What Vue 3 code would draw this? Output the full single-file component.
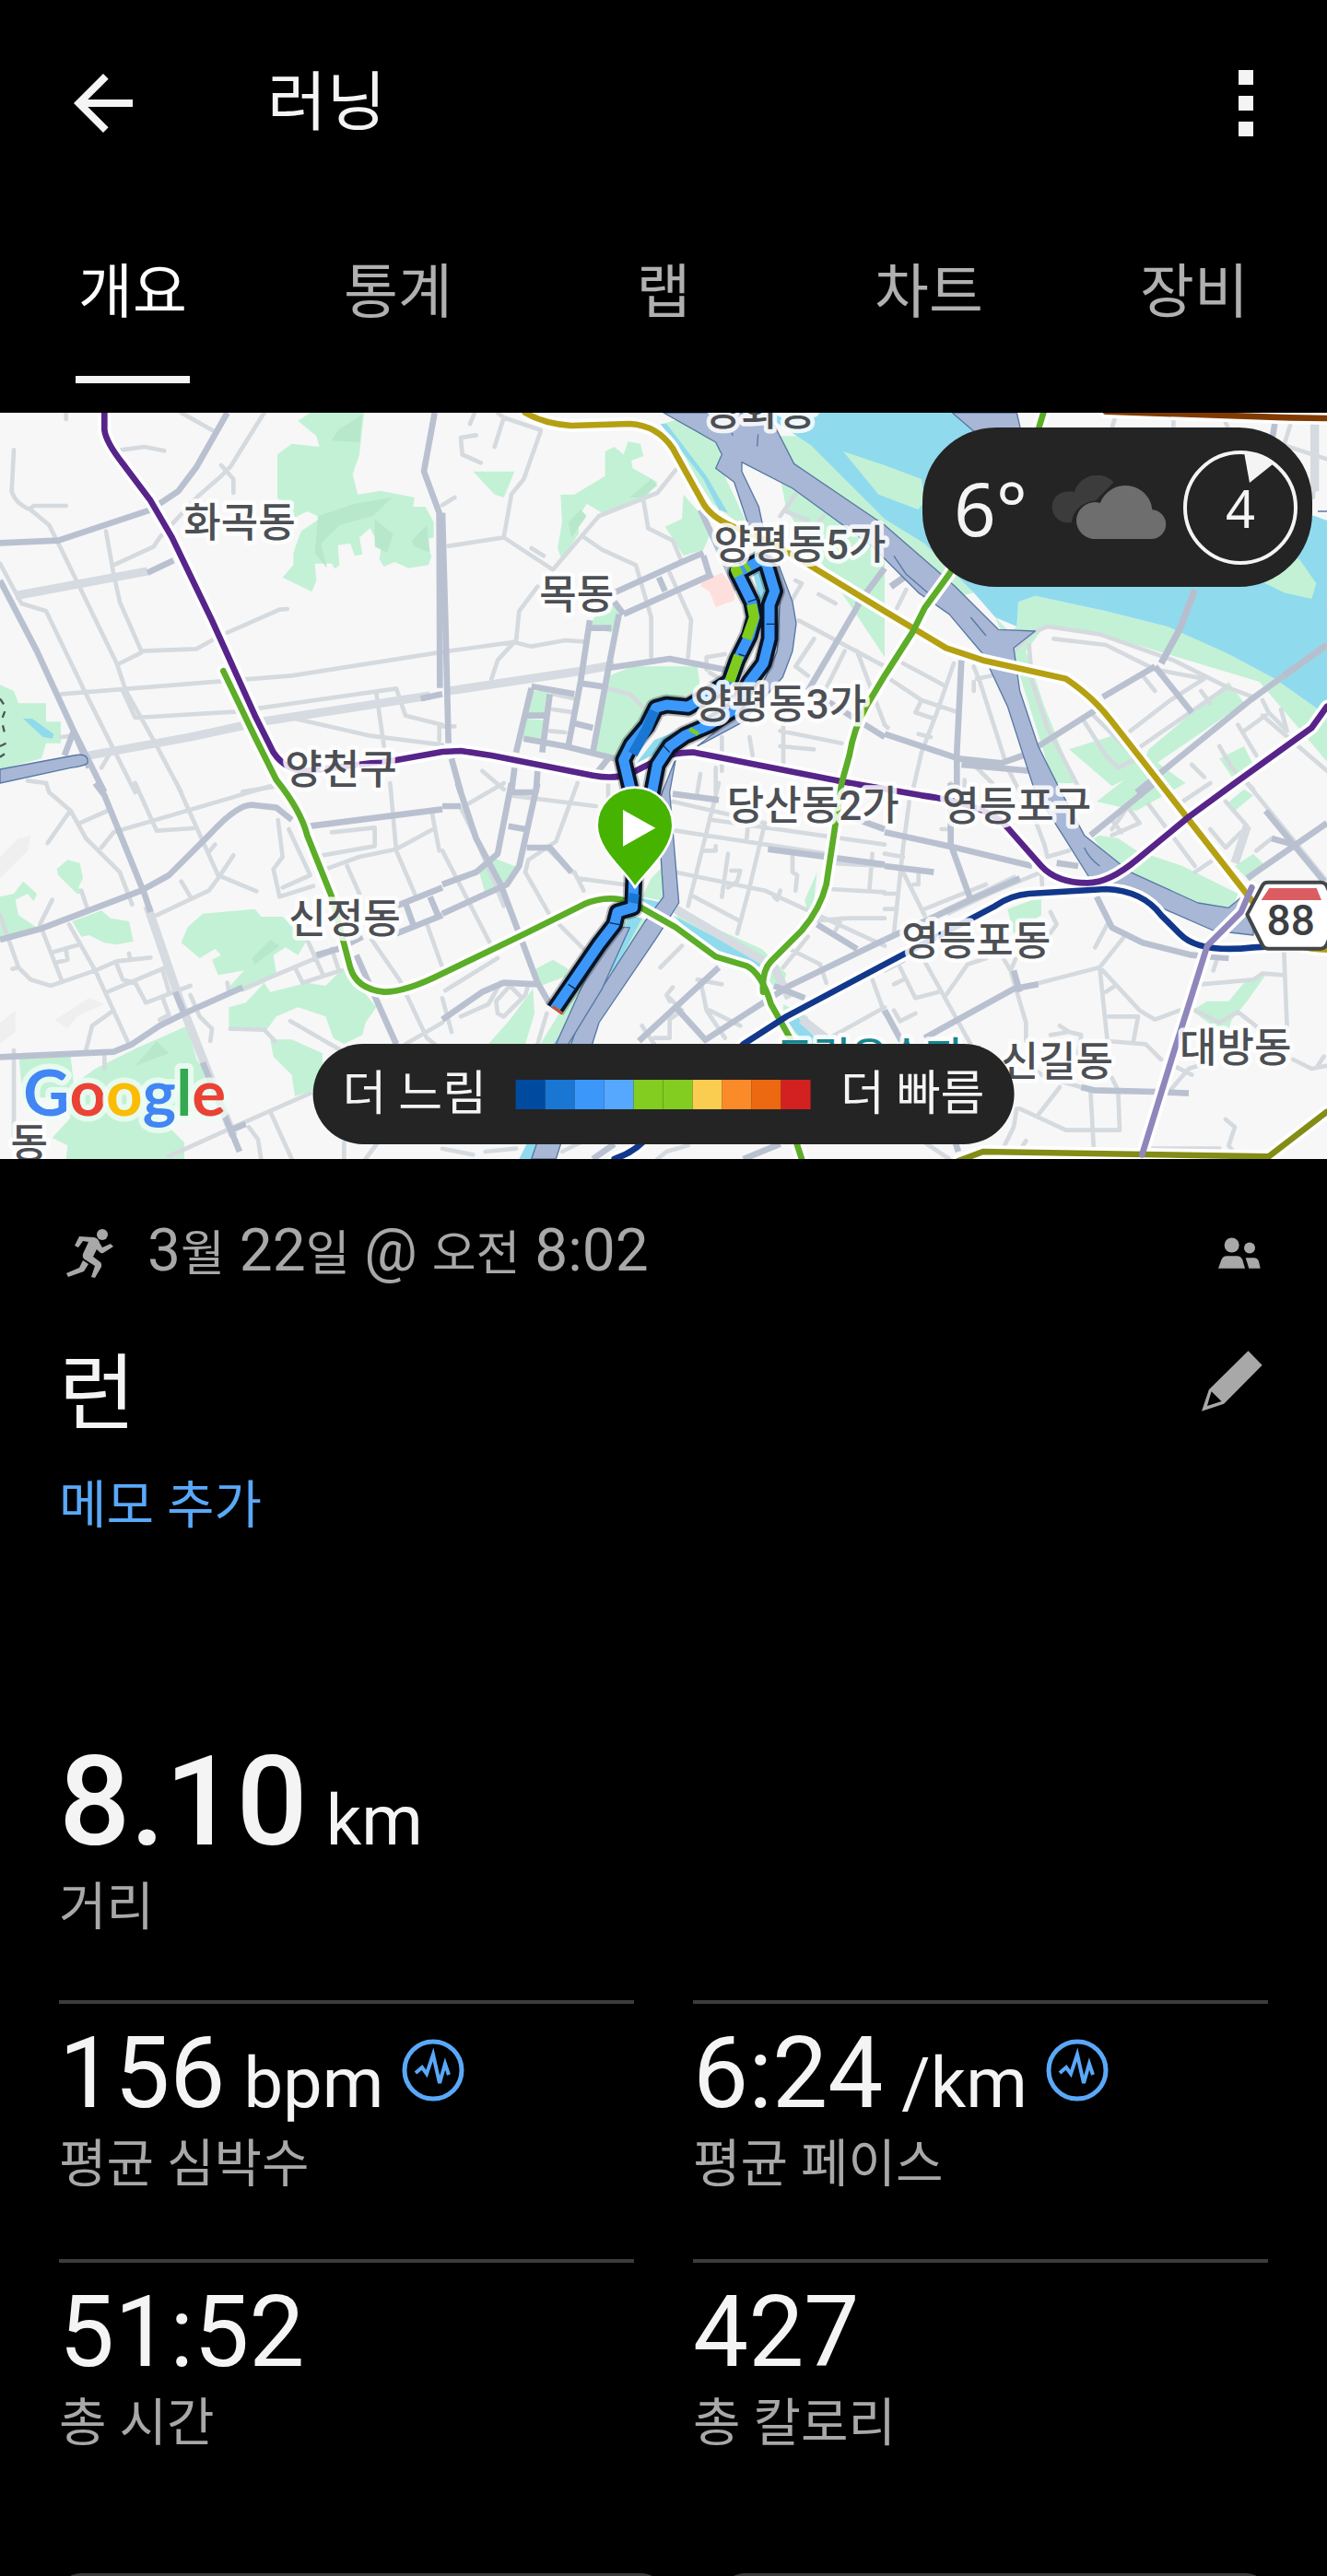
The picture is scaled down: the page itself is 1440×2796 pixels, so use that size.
<template>
  <div class="activity">
    <header class="top-bar">
      <button class="icon-btn" type="button" aria-label="뒤로">
        <svg class="back" viewBox="4 4 16 16">
          <path d="M20 11H7.83l5.59-5.59L12 4l-8 8 8 8 1.41-1.41L7.83 13H20z" />
        </svg>
      </button>
      <h1>러닝</h1>
      <button class="icon-btn more" type="button" aria-label="더보기">
        <i></i><i></i><i></i>
      </button>
    </header>

    <nav class="tabs">
      <button
        v-for="tab in tabs"
        :key="tab"
        type="button"
        :class="['tab', { active: tab === current }]"
        @click="current = tab"
      >
        {{ tab }}
      </button>
    </nav>

    <section class="map">
      <svg class="canvas" viewBox="0 24 4320 2430">
        <rect class="land" y="24" width="4320" height="2430" />

        <!-- parks and water -->
        <path v-for="d in hills" :key="d" class="hill" :d="d" />
        <path v-for="d in parks" :key="d" class="park" :d="d" />
        <path v-for="d in shades" :key="d" class="shade" :d="d" />
        <path v-for="d in water" :key="d" class="water" :d="d" />
        <path v-for="d in islands" :key="d" class="park" :d="d" />
        <path class="mall" d="M2290 570l60-25 40 50 0 40-60 22-20-50-30-20z" />

        <!-- streets -->
        <g v-for="(tile, i) in tiles" :key="i" :transform="`translate(${tile.x} ${tile.y})`">
          <path class="minor" :d="tile.minor" />
          <path class="wide" :d="tile.wide" />
          <path class="major" :d="tile.major" />
        </g>
        <path class="bridge" d="M3890 600L3840 730 3780 840M4320 780L4180 880M3000 520L2900 590" />
        <path v-for="d in highways" :key="d" class="highway" :d="d" />
        <path class="lane" d="M2382 90l4 8M2468 94l-3 40M2910 490l40 60 70 60M3160 690l50 60M4290 345l30 0M3530 1440q15 35 50 60" />
        <path class="trail" d="M0 955l20 30-15 40 12 50M0 1110l40-20M0 1145l15-10" />

        <!-- subway -->
        <path v-for="line in subway" :key="line.d" class="casing" :d="line.d" />
        <path
          v-for="line in subway"
          :key="line.color + line.d"
          class="rail"
          :stroke="line.color"
          :d="line.d"
        />

        <!-- run track -->
        <path class="track-glow" :d="track" />
        <path class="track-edge" :d="track" />
        <path class="track" :d="track" />
        <path class="track dark" d="M2065 1590L2060 1620M2060 1135l45-80 25-60" />
        <path class="track quick" d="M2375 900L2405 815M2430 760L2455 690 2447 648M2405 555l-10-20 15-5M2425 530L2437 522M2256 1068L2263 1056" />
        <path class="tick" d="M2435 640l36-12M2495 712h30M2405 810l25 8M2160 1108l20 22M1985 1685l32 6M1850 1885l24 16" />
        <path class="track-end" d="M1800 1958l30 22" />

        <text v-for="p in places" :key="p.name" :class="['place', p.kind]" :x="p.x" :y="p.y">
          {{ p.name }}
        </text>

        <!-- route shield -->
        <g class="shield">
          <path class="plate" d="M4127 1553H4300Q4312 1553 4318 1563L4362 1658 4318 1758Q4312 1769 4300 1769H4127Q4115 1769 4110 1758L4060 1658 4110 1563Q4115 1553 4127 1553z" />
          <path class="band" d="M4132 1572H4286L4302 1611H4106z" />
          <text x="4202" y="1726">88</text>
        </g>

        <!-- start pin -->
        <path class="pin" d="M2067 1570C2040 1520 1943 1450 1943 1368A124 124 0 0 1 2191 1368C2191 1450 2100 1520 2067 1570z" />
        <path class="play" d="M2028 1317L2134 1376 2028 1436z" />

        <text class="google" x="76" y="2312"><tspan fill="#4285f4">G</tspan><tspan fill="#ea4335">o</tspan><tspan fill="#fbbc05">o</tspan><tspan fill="#4285f4">g</tspan><tspan fill="#34a853">l</tspan><tspan fill="#ea4335">e</tspan></text>
      </svg>

      <div class="weather">
        <span class="temp">6°</span>
        <svg class="clouds" viewBox="545 228 376 210">
          <path fill="#3c3c3c" d="M598 382A51 51 0 0 1 598 280Q610 279 620 282A76 76 0 0 1 748 250L690 310Q620 320 610 382z" />
          <path fill="#6e6e6e" d="M680 435A60 60 0 1 1 704 318A88 88 0 0 1 874 340A47 47 0 0 1 868 435z" />
        </svg>
        <div class="wind">
          <svg viewBox="0 0 124 124">
            <circle cx="62" cy="62" r="60" />
            <path d="M66 2Q84 4 97 15L72 35z" />
          </svg>
          <span>4</span>
        </div>
      </div>

      <div class="legend">
        <span>더 느림</span>
        <div class="scale">
          <i v-for="(color, i) in paceColors" :key="i" :style="{ background: color }"></i>
        </div>
        <span>더 빠름</span>
      </div>
    </section>

    <main class="details">
      <div class="meta">
        <svg class="runner" viewBox="0 0 52 54">
          <circle cx="39" cy="7" r="6" />
          <path d="M14 9L30 10Q35 11 36 16L39 21 48 17 51 20 40 27Q38 28 36 26L33 23 29 31 37 37Q39 39 38 42L31 54 27 53 31 41 20 34Q17 32 18 28L24 15 18 14 13 21 9 19z" />
          <path d="M18 35l6 4-5 8L2 53 0 49l14-6z" />
        </svg>
        <time>3<b>월</b> 22<b>일</b> @ <b>오전</b> 8:02</time>
        <svg class="people" viewBox="184 128 138 101">
          <circle cx="228" cy="153" r="24" />
          <circle cx="286" cy="162" r="18" />
          <path d="M184 229L194 201Q199 188 212 188H244Q258 188 263 201L271 229z" />
          <path d="M273 194H300Q312 194 316 206L321 229H284z" />
        </svg>
      </div>

      <div class="name">
        <h2>런</h2>
        <button type="button" aria-label="이름 편집">
          <svg viewBox="128 497 200 200">
            <path fill-rule="evenodd" d="M281 498L327 545 201 672 128 696 152 625zM160 631L146 679 193 664z" />
          </svg>
        </button>
      </div>

      <a class="memo" href="#memo">메모 추가</a>

      <div class="distance">
        <p class="value"><span>8.10</span><small>km</small></p>
        <p class="label">거리</p>
      </div>

      <div class="stats">
        <div v-for="s in stats" :key="s.label" class="stat">
          <div class="reading">
            <p class="value">
              <span>{{ s.value }}</span><small v-if="s.unit">{{ s.unit }}</small>
            </p>
            <svg v-if="s.unit" class="pulse" viewBox="0 0 68 68">
              <circle cx="34" cy="34" r="31" />
              <path d="M15 37L22 31 27 38 34 17 41 48 47 27 51 39" />
            </svg>
          </div>
          <p class="label">{{ s.label }}</p>
        </div>
      </div>

      <div class="cards">
        <div class="card"></div>
        <div class="card"></div>
      </div>
    </main>
  </div>
</template>

<script setup>
import { ref } from "vue";

const tabs = ["개요", "통계", "랩", "차트", "장비"];
const current = ref("개요");

const paceColors = [
  "#004a9f",
  "#1976d2",
  "#3b97fa",
  "#56a8ff",
  "#83cc20",
  "#83cc20",
  "#facc4f",
  "#fb8b28",
  "#ec6811",
  "#d32020",
];

const stats = [
  { value: "156", unit: "bpm", label: "평균 심박수" },
  { value: "6:24", unit: "/km", label: "평균 페이스" },
  { value: "51:52", label: "총 시간" },
  { value: "427", label: "총 칼로리" },
];

const places = [
  { name: "화곡동", x: 780, y: 430 },
  { name: "양천구", x: 1110, y: 1234 },
  { name: "목동", x: 1877, y: 662 },
  { name: "양화동", x: 2475, y: 66 },
  { name: "양평동5가", x: 2604, y: 500 },
  { name: "양평동3가", x: 2540, y: 1020 },
  { name: "당산동2가", x: 2647, y: 1350 },
  { name: "영등포구", x: 3310, y: 1353 },
  { name: "영등포동", x: 3178, y: 1790 },
  { name: "신길동", x: 3442, y: 2185 },
  { name: "대방동", x: 4022, y: 2140 },
  { name: "신정동", x: 1122, y: 1718 },
  { name: "동", x: 95, y: 2450 },
  { name: "도림유수지", x: 2830, y: 2168, kind: "spot" },
];

const hills = [
  "M0 1470l60-60 40-10-10 50-90 90z",
  "M0 2010l50-40v70l-50 40z",
  "M180 2000l110-70 50 20-90 40-30 40z",
];

const parks = [
  // 화곡동
  "M970 50L1010 24H1185L1170 160 1148 225 1165 290 1240 278 1350 300 1345 330 1385 330 1412 380V430L1375 440 1405 490 1395 520 1330 530 1285 510 1250 525 1235 500 1240 470 1205 400 1170 430 1180 485 1155 490 1140 450 1100 455 1105 520 1090 532 1080 515 1025 515 1030 570 1015 607 920 560 955 520V480L980 410 1045 365 1000 345 960 365 903 300V160L950 125 1040 135 1030 100z",
  "M0 910L45 930 60 970H150V1030H198V1100H150L135 1150 0 1185z",
  "M190 1530L185 1510 220 1480 260 1490 270 1540 255 1570 275 1590 250 1590z",
  "M0 1600L45 1590 75 1550 120 1590 110 1615 90 1590 50 1610 60 1660 120 1700 0 1735z",
  "M235 1680L330 1645 360 1670 420 1680 434 1745 380 1756 340 1750 290 1725 265 1730z",
  "M590 1750L610 1700 660 1655 830 1640 850 1665 920 1665 1000 1740 970 1790 930 1765 890 1790 900 1850 860 1880 790 1910 740 1900 795 1840 710 1855 690 1805 720 1790 700 1770 650 1800z",
  "M745 1960L800 1945 860 1880 880 1910 1000 1880 1060 1890 1120 1830 1225 1960 1190 2010 1180 2050 1120 2080 1085 2060 1060 1990 970 1960 900 1990 870 2030 745 2030z",
  "M880 2065L950 2065 1050 2110V2220L960 2250 950 2180 890 2120z",
  "M60 2110L230 2120 240 2210 310 2160 450 2090 520 2060 610 2020 640 2130 690 2200 660 2300 500 2300 600 2400V2454H215L220 2410 170 2385 230 2320 200 2250 75 2260z",
  // 목동
  "M1540 215L1675 215 1640 300 1610 290z",
  "M1825 290L1870 290 1970 230V150L2000 135 2030 160 2045 118 2085 125 2095 165 2055 180 2060 205 2140 250 2110 290 1960 350 1910 320 1880 370 1885 415 1830 505 1815 465 1830 380z",
  "M2165 395L2220 370 2225 290 2320 400 2290 470 2225 490 2195 440z",
  "M1935 690L2010 640 2020 690 1990 740 1920 720z",
  "M1985 880L2060 850 2270 850 2280 920 2200 960 2130 970 2040 1080 2010 1150 1930 1120z",
  "M1725 930h65l-10 80-70-5zM1710 1020l65 5-8 70-70-10z",
  // 안양천
  "M2155 60L2290 24 2340 120 2350 210 2430 380 2400 380 2320 320z",
  "M2390 420L2480 440 2430 510 2460 480z",
  "M1560 1520L1610 1475 1690 1505 1650 1560 1580 1590z",
  "M1735 1840L1800 1805 1850 1835 1840 1860 1760 1890z",
  "M1735 1900L1740 1980 1710 2080H1590L1660 2000z",
  "M2120 1540L2160 1500 2165 1615 2090 1600z",
  "M2050 1660L2120 1680 1970 1880 1800 2078 1760 2078 1900 1850z",
  "M2195 1650L2300 1690 2480 1770 2560 1850 2540 1920 2450 1800 2260 1740z",
  "M2660 1520l-20 180-20-90z",
  // 여의도
  "M2880 820L2560 340 2520 130 2500 100 2620 100 2860 340 3100 480 3170 610 3130 620 2880 430z",
  "M3240 690L3290 740 3310 720 3315 640 3370 620 3600 670 3800 720 4000 810 4150 890 4320 1010V1160L4100 900 3900 840 3600 750 3400 720 3340 800 3400 980 3500 1230 3430 1230 3320 880z",
  "M3480 1120L3640 1070 3740 1180 3620 1240zM3740 1120L4000 900 4050 970 3700 1210z",
  "M3970 1150l80-40 30 60-70 40z",
  "M3570 1290L3750 1150 3860 1230 3700 1320zM3990 1300l60-50 30 20-60 50z",
  "M3580 1400L3640 1410 3700 1450 3850 1500 4030 1590 4010 1640 3900 1620 3640 1520 3560 1410z",
  "M4020 1500l60-40 40 40-50 50z",
  "M3280 1640L3390 1600V1660L3300 1720z",
  "M3880 1970L3930 1940 4000 1940 4050 1880 4120 1855 4060 1940 4010 2000 4000 2030 3960 2030z",
  "M2550 1950l80 40 10 90-90-60z",
];

const shades = [
  "M1100 80l80-50-10 90-90-5zM1035 360l120-40 120-20-60 60-110 30-60 60 20 80-40-50z",
  "M1220 370l60 50-20 60-40-20zM1340 440l50-50 10 90-50-20z",
  "M2050 300l70-60 20 20-50 40zM1850 380l40-40 20 20-50 70z",
  "M820 1800l60-60 30 20-80 60zM440 2150l70-80 40 40z",
];

const water = [
  "M2480 24H3100L3210 90 3400 250 4280 360 4320 375V1010L4150 890 4000 810 3800 720 3600 670 3370 620 3315 640 3310 720 3240 690 3170 610 3010 450 2880 370 2640 130z",
  "M75 1020h30l70 50-5 15-30-5z",
  "M2150 60L2170 60 2300 230 2370 350 2340 340 2290 240z",
  "M2440 500l60 60-10 120-20-60z",
  "M2230 1050L2350 1010 2160 1130 2090 1180 2060 1180 2130 1090z",
  "M2090 1605L2160 1620 2140 1650 2080 1630zM2050 1660l40 10-90 170-30 10z",
  "M1860 2000l30-50-10 130h-80zM1690 2454l30-60h60l-20 60z",
  "M2190 1660L2480 1810 2470 1830 2280 1750z",
  "M2580 1970l90 110h-50l-60-80z",
];

const islands = [
  "M2745 150L2880 195 3000 240 3010 310 2990 340 2860 290z",
  "M4000 490L4230 500 4285 580 4270 630 4180 610 4100 570z",
];

const highways = [
  "M2160 24H2500L2585 190 2880 390 3110 590 3250 730 3370 735 3300 790 3320 930 3380 1110 3450 1250 3530 1400 3680 1520 3900 1620 4000 1636 4080 1570V1725L3950 1710 3790 1640 3560 1560 3460 1400 3370 1260 3280 980 3200 810 3090 680 2990 610 2840 460 2580 270 2415 185 2415 215 2470 330 2485 400 2440 400 2390 250 2330 205 2350 160 2330 120z",
  "M2510 510L2535 520 2580 640 2592 710 2580 800 2548 885 2490 950 2420 1030 2270 1110 2320 1070 2460 960 2530 800 2540 620z",
  "M2200 1150L2180 1260 2210 1620 2140 1730 1950 2010 1810 2454H1730L1880 2020 2100 1680 2160 1600 2140 1300z",
  "M2050 1700L1960 1900 1850 2080H1810L1900 1880 2000 1700z",
  "M0 1185L240 1140Q290 1130 285 1165 275 1175 230 1180L0 1230z",
  "M3100 24H3310L3330 110 3200 110z",
];

// street outlines, one entry per cell of a 3 x 2 grid
const tiles = [
  {
    x: 0,
    y: 0,
    minor:
      "M45 145L38 280Q50 320 100 340L160 390 200 470 380 840 410 930 500 1090 590 1260M100 335L110 327H215M215 20V45M395 145L470 135 535 148M590 24L690 80M860 24L750 200 720 230 640 300 520 430 500 460 370 520M720 195L760 240V285M345 410L370 550 390 640 460 800 640 793 690 765M740 740L910 665 935 663M390 840L460 805M200 940L950 880 1440 803M0 515L70 645 150 670 280 940 370 1120 440 1260M400 930L440 1017 760 998 1290 922 1320 1010 1440 1040M1225 935L1250 1110M960 1020L1200 1075 1440 1105M200 1080L240 1075M90 1222L150 1230M790 1258L900 1240M1430 1040V1090M330 1180L360 1130",
    wide: "M50 620L480 540M290 1140L620 1080 850 1030 1400 945",
    major:
      "M0 448L190 440 490 340 580 280 640 200 740 24M0 570L120 800 240 1060 340 1260M1415 24L1380 215 1430 350 1432 920M480 545L565 505M1370 955L1440 940M240 1060L210 1140M240 1060L290 1180",
  },
  {
    x: 1440,
    y: 0,
    minor:
      "M90 60L105 24M200 40L170 135M110 97L60 105 65 160 125 187M180 24L200 40 320 80M320 85L265 240 225 290 200 430 20 458M200 430L360 535 510 360 700 285 760 210M0 325L40 300M455 425L520 470 630 520 680 690V820M290 465L330 490M655 310L670 400 750 440 780 510M310 590L250 670 240 770 20 800M230 770L290 785 400 765 470 770M230 775L180 830 160 890M740 545L810 700 800 820M530 920L610 940 650 980M860 860V820L920 810M870 870L920 900M360 940L430 955M360 990L430 1000M350 1060L400 1065M1150 290L1100 360M1120 345L1190 375M1240 360L1190 430M1225 615L1280 645M1150 570L1170 580 1050 780M1160 700L1440 850M1210 760L1150 850 1190 880M1310 800L1250 920M1350 800L1440 1040M1100 1060L1300 1100M1110 1010V1180M1100 1110L1210 1120M1000 1080L1010 1140M910 1080V1190M890 1180V1260M0 1045H40M130 1190L200 1250M840 1200L830 1260",
    wide: "M20 930L450 865 560 845",
    major:
      "M0 350L10 700 20 1100M560 610L780 510 850 480M590 680L880 550M590 680L560 640M705 560L725 605M850 490L870 555M480 700L450 900 410 1110M480 725H550M575 680L540 860 490 1130M540 855L740 825 920 860M290 915L430 940M450 905L520 915M290 920L240 1130M350 940L325 1130M275 1010H340M430 1035L490 1050M265 1085L400 1110 560 1150M235 1180L225 1260M310 1190L305 1260M30 1150L60 1260M540 1150L500 1200M1360 640L1190 930M1440 530L1350 650M1200 930L1440 1080M840 340L960 600",
  },
  {
    x: 2880,
    y: 0,
    minor:
      "M750 40L735 90M940 45V80M1110 55L1120 80M1320 65L1300 130 1440 175M1400 65L1395 300M70 600L40 660M225 840L170 1000 120 1130 90 1260M60 840L190 910M15 890L120 960 240 1000M120 960L100 1000 160 1020M290 850L310 900 390 1150M300 890L350 880M290 900V930M110 1070L150 1080M0 1040L10 1050M420 800L480 740 530 720 700 745 940 830 1120 920 1200 950M470 780L480 900 530 1050 640 1260M550 760L720 780 880 860 1040 890M840 880L880 930M800 1060L930 960 1040 890M820 1120L1110 920M650 1030L720 1140 760 1180 840 1140M680 1010L740 1070 780 1110M1030 930L1060 970M1230 960L1250 1000 1310 1060 1290 990M1170 1060L1240 1010M1150 1040L1210 1140M1090 1110L1130 1180 1200 1250M1230 1010L1440 1190M1000 1170L1040 1210M300 1180L350 1230M400 1180L440 1260M260 1220V1260M1405 180V220",
    wide: "M1400 60V280",
    major:
      "M250 830L235 1130V1260M0 1070L240 1150 380 1165 450 1140M500 1110L690 990M710 950L880 850M880 850L1000 1000M820 1260L1190 960 1300 880M250 1170L470 1190M1270 60L1260 120",
  },
  {
    x: 0,
    y: 1230,
    minor:
      "M150 0L160 30 230 90 280 180 390 290 430 395M225 95L155 195M260 130L350 90M440 0L510 155 630 147M575 0L710 300 835 352M330 210L370 160 880 10M700 200L680 225M760 235L710 310 680 350 510 430M590 320L620 370M905 120L920 240 890 280 910 370 1020 335M940 150L1010 300 920 340M1080 160L1220 145V205L1050 235M1060 280L1170 240 1290 215 1410 150M1130 270L1170 360M1270 0L1290 220 1350 360M1405 90L1430 220M0 430L60 600 100 640 165 660 310 610 380 580 490 568M420 555L425 575M40 605L60 600M170 380L130 460 200 640M175 550L260 525M225 460L310 610 360 720 415 840M180 585L220 575 215 545M380 590L400 640 440 650 475 715 620 660M350 680L540 600M530 610L550 680M520 770L550 755 530 700M620 690L650 760 690 800 685 840M370 740L300 790 280 870M265 350L285 410M790 670L1100 540M960 600L985 650 1110 610M1000 510L1050 620M1080 540L1100 600M1210 510L1300 640 1390 830M740 650L745 680M750 800L860 803 895 840M945 775L1110 870M1390 460L1440 600M45 870V1150M340 890V930M550 1215L760 1120 1010 1010M880 1070L950 1224M810 1120L840 1160 850 1224M1120 1170V1224M1190 1224L1230 1170M1320 850L1440 780M1390 830L1440 870",
    wide: "M480 400L590 720 760 1150",
    major:
      "M310 0L340 40 470 360 490 420M0 510L130 475 460 350 550 300 680 170Q780 60 830 72L900 80 950 120M1010 140L1440 85M0 892L370 875 430 850 520 790 600 750 790 665M570 680L600 750M1180 500L1100 540 1030 560M1290 400L1440 340M1290 490L1440 430M1320 390L1345 460M1400 370L1430 440M1160 560L1290 850M660 910L780 1200M750 1130L800 1110",
  },
  {
    x: 1440,
    y: 1230,
    minor:
      "M80 70L200 0M220 40L500 75M440 0L370 190 280 250 270 290 350 430 470 550M100 160L160 300 200 400M0 220L160 530M100 160L60 80M340 210L420 290M440 310L590 330M430 290L460 350M540 0V60M10 675L180 570M30 810L0 700M190 650L150 720 60 760M190 650L280 655 270 690 200 760 180 750 175 710 220 660 260 700M340 750L310 850M900 0L800 400M750 60L1050 130M880 120L1440 200M760 155L1250 230M1000 90L990 190M1050 130L1000 340M760 290L1050 350 1440 530M930 230L910 370M850 220H890V205M940 285H970L960 320 930 340M1140 240V290L1155 300 1150 350M1100 350L1090 380 1080 370M820 370L970 450M1000 340L960 490M1250 260L1440 270M1260 345L1440 355M1400 230L1390 350M1190 450L1320 440 1440 440M1300 440L1280 480M1130 540L1230 590 1250 650M1190 500L1110 600M780 530L710 600M830 640L910 655M870 740L970 790M840 640L860 740 920 830M650 790L690 850M740 710L730 690 750 665M740 700L780 740 740 770 740 830 690 830M0 1190L100 1210M140 1200L240 1190M390 1200L450 1170M800 1180L730 1200 700 1224M1170 760L1260 830 1440 730M1400 640L1440 750",
    wide: "M760 410L1080 600 1130 700M1170 770L1240 830",
    major:
      "M50 0L110 180 190 330 310 650 350 720M0 75H60M225 0L180 230 110 290 0 330M310 0L250 270 210 330 0 425M225 30H300M215 140L270 150M275 210H350L420 290M0 770L130 680 200 650 310 655M900 600L640 840M850 840L1130 660 1440 510M760 730L860 840M750 35L900 55M1300 100L1440 150M1060 215L1440 265M1220 460L1350 540M1080 660L1180 700M490 1224L560 1175M980 1224L1100 1175",
  },
  {
    x: 2880,
    y: 1230,
    minor:
      "M80 60L60 210 30 490M215 0V150H185M0 230L60 240M0 360H40M0 410H40M60 290L130 430M110 290V330H95M130 410L330 330M170 430L510 290 515 370M490 120L520 200 530 240M530 240L600 220M740 120L770 160M800 90L830 130 740 170M860 70L1010 270M790 80L740 150M1060 150L1110 210 1160 160M1110 60L1180 140M1010 290L1070 250M1180 0L1440 320M1210 220L1260 180M970 60L1060 0M540 420L560 460 530 500M730 450L685 535M780 500L700 600 430 670M700 600L725 840 850 850 900 900M710 610L830 740 880 770 960 740M720 680L750 660M730 760H825L810 840M380 560L410 610 460 780V840M410 610L440 540M130 580L280 850M50 600L100 700 175 680M30 655L60 640M200 690L270 590 330 570M0 610L60 580M30 740L50 775 100 750M570 790L600 810 540 820M600 810L640 820 630 880M1030 655L1200 640 1230 620 1300 625M1300 550L1310 800M1080 580L1070 610M1010 740L1090 780 1150 745 1220 800M1330 900L1390 930 1440 920M1410 920L1430 890M930 1000L990 930 1050 910M940 920L1000 950M440 1060L590 1130 765 1130 760 1000 740 960M670 1000L680 1180M570 990L500 1080M430 1060L420 1120 390 1180M480 930L530 960 640 990M460 1165L450 1180M1110 1095L1140 1120 1120 1180 1135 1200M860 1190H1090M130 1170L210 1224",
    wide: "M430 310L200 420M1140 260L1180 140",
    major:
      "M0 160L230 210 480 270M215 0V200L280 380M0 270L160 290M0 510L280 380 440 310M690 370L740 470 840 520 1000 560 1120 570M670 170L880 0M1180 310L1440 130M1240 90L1430 320M1330 200L1260 180M500 655L420 670 130 830M420 610L440 680M0 740L60 850M560 260L630 270M640 990L680 1000 880 1005 990 1010M230 1170L240 1200",
  },
];

const subway = [
  { color: "#803a00", d: "M3600 20L3900 30 4200 40 4320 42" },
  { color: "#b5a012", d: "M1710 24Q1770 60 1860 66L2050 60Q2140 65 2190 140L2290 320Q2320 370 2400 400L2520 450 2880 670 3080 790 3200 830 3470 890Q3560 950 3620 1030L3800 1260 4050 1580 4150 1710Q4200 1770 4320 1772" },
  { color: "#57248a", d: "M340 20V80Q345 120 400 190L490 310 560 430 690 700 830 1010 890 1130Q930 1190 1000 1190L1290 1155 1440 1128 1500 1125 1600 1140 1930 1205Q2000 1218 2050 1200L2150 1150Q2200 1128 2260 1130L2740 1225 3000 1270Q3220 1300 3280 1375L3390 1500Q3440 1555 3540 1555 3610 1555 3700 1480L3870 1340 4020 1230 4270 1050 4320 980" },
  { color: "#5cad27", d: "M727 865L830 1080 900 1220Q980 1320 1000 1400L1080 1600 1140 1830Q1160 1900 1250 1910 1320 1910 1440 1850L1710 1720 1900 1625Q1980 1590 2060 1620L2200 1700 2330 1795 2430 1825Q2480 1850 2510 1950L2600 2110 2570 2330 2610 2454" },
  { color: "#5cad27", d: "M3398 20L3380 80 3090 550 3010 660 2970 740 2880 880 2820 980Q2780 1050 2765 1140L2740 1230 2690 1560Q2670 1640 2610 1710L2510 1810Q2480 1840 2484 1910" },
  { color: "#12388b", d: "M4320 1752L4080 1765Q3900 1785 3840 1720L3780 1660Q3720 1580 3600 1575L3350 1590Q3290 1595 3240 1630L2880 1820 2560 1990 2420 2080 2110 2380Q2070 2430 2000 2454" },
  { color: "#838c15", d: "M3120 2460L3200 2430 4130 2446 4320 2300" },
  { color: "#8f87bc", d: "M4075 1570L4040 1650 3930 1760 3880 1920 3820 2110 3718 2440" },
];

const track =
  "M1805 1967L1950 1755 2000 1690 2010 1650 2060 1635 2065 1500 2050 1240 2030 1155 2055 1105 2105 1045 2135 985 2170 975 2240 982 2310 940 2375 900 2400 830 2440 750 2457 690 2447 640 2400 545 2475 505 2495 515 2522 605 2505 650 2505 760 2485 840 2440 900 2390 990 2310 1040 2230 1075 2180 1110 2140 1170 2115 1300 2070 1500";
</script>

<style>
body {
  background: #000;
}
</style>

<style scoped>
.activity {
  background: #000;
  color: #f4f4f4;
  font-family: Roboto, "Noto Sans CJK KR", sans-serif;
}
h1,
h2,
p {
  margin: 0;
  font-weight: 400;
}
button {
  padding: 0;
  border: 0;
  background: none;
  color: inherit;
  font: inherit;
  cursor: pointer;
}
svg {
  display: block;
}

.top-bar {
  display: flex;
  align-items: center;
  height: 224px;
  padding: 0 80px;
}
.top-bar h1 {
  flex: 1;
  margin-left: 146px;
  font-size: 70px;
  line-height: 80px;
}
.back {
  width: 64px;
  height: 64px;
  fill: #f4f4f4;
}
.more {
  display: flex;
  flex-direction: column;
  gap: 12px;
}
.more i {
  width: 16px;
  height: 16px;
  background: #f4f4f4;
}

.tabs {
  display: grid;
  grid-template-columns: repeat(5, 1fr);
  height: 192px;
  padding-bottom: 32px;
}
.tab {
  display: flex;
  flex-direction: column;
  align-items: center;
  padding-top: 50px;
  color: #b0b0b0;
  font-size: 64px;
  line-height: 88px;
}
.tab.active {
  color: #fff;
}
.tab.active::after {
  content: "";
  width: 124px;
  height: 8px;
  margin-top: 46px;
  background: #f4f4f4;
}

.map {
  position: relative;
}
.canvas {
  width: 100%;
}
.canvas path {
  stroke-linejoin: round;
}
.land {
  fill: #f7f7f7;
}
.hill {
  fill: #efefef;
}
.park {
  fill: #c3f1d5;
}
.shade {
  fill: #b8e8cb;
}
.water {
  fill: #90daee;
}
.mall {
  fill: #ffdfdc;
}
.minor,
.wide,
.major,
.bridge,
.lane,
.trail,
.casing,
.rail,
.track-glow,
.track-edge,
.track,
.tick,
.track-end {
  fill: none;
}
.minor {
  stroke: #d5dadf;
  stroke-width: 14;
  stroke-linecap: round;
}
.wide {
  stroke: #d5dbe1;
  stroke-width: 28;
}
.major {
  stroke: #b9c1d1;
  stroke-width: 20;
}
.bridge {
  stroke: #b7bfce;
  stroke-width: 22;
}
.highway {
  fill: #a7b7d5;
  stroke: #5878a4;
  stroke-width: 4;
}
.lane {
  stroke: #5878a4;
  stroke-width: 4;
}
.trail {
  stroke: #4a5a55;
  stroke-width: 7;
  stroke-dasharray: 22 26;
}
.casing {
  stroke: #fff;
  stroke-width: 42;
  stroke-linecap: round;
}
.rail {
  stroke-width: 20;
  stroke-linecap: round;
}
.track-glow {
  stroke: rgba(0, 0, 0, 0.25);
  stroke-width: 68;
}
.track-edge {
  stroke: #071426;
  stroke-width: 56;
}
.track {
  stroke: #3b98fa;
  stroke-width: 33;
}
.track.dark {
  stroke: #1976d2;
}
.track.quick {
  stroke: #80cc1c;
}
.tick {
  stroke: #0d2c4e;
  stroke-width: 4;
}
.track-end {
  stroke: #d3542a;
  stroke-width: 10;
}
.place {
  fill: #4c4f54;
  stroke: rgba(255, 255, 255, 0.85);
  stroke-width: 28;
  stroke-linejoin: round;
  paint-order: stroke;
  font-size: 132px;
  font-weight: 500;
  text-anchor: middle;
}
.place.spot {
  fill: #16868f;
}
.shield .plate {
  fill: #fff;
  stroke: #44474a;
  stroke-width: 12;
}
.shield .band {
  fill: #dc5d61;
}
.shield text {
  fill: #3d4043;
  font-size: 138px;
  font-weight: 500;
  text-anchor: middle;
}
.pin {
  fill: #46b300;
  stroke: #fff;
  stroke-width: 8;
}
.play {
  fill: #fff;
}
.google {
  stroke: rgba(240, 252, 245, 0.8);
  stroke-width: 36;
  stroke-linejoin: round;
  paint-order: stroke;
  font-family: Lato, sans-serif;
  font-size: 207px;
  font-weight: 700;
}

.weather {
  position: absolute;
  top: 16px;
  right: 16px;
  display: flex;
  align-items: center;
  box-sizing: border-box;
  width: 423px;
  height: 173px;
  padding: 0 16px 0 34px;
  border-radius: 80px;
  background: #242424;
}
.temp {
  flex: 1;
  font-family: "Noto Sans", sans-serif;
  font-size: 80px;
  line-height: 96px;
}
.clouds {
  width: 125px;
  height: 70px;
  margin: 0 18px 0 0;
}
.wind {
  display: grid;
  place-items: center;
  width: 124px;
  height: 124px;
  font-family: "Noto Sans", sans-serif;
  font-size: 56px;
  line-height: 64px;
}
.wind svg,
.wind span {
  grid-area: 1 / 1;
}
.wind svg {
  width: 124px;
  fill: #f4f4f4;
}
.wind circle {
  fill: none;
  stroke: #f4f4f4;
  stroke-width: 4;
}

.legend {
  position: absolute;
  bottom: 16px;
  left: 50%;
  display: flex;
  align-items: center;
  gap: 32px;
  height: 109px;
  padding: 0 32px;
  border-radius: 56px;
  background: #242424;
  font-size: 52px;
  line-height: 64px;
  white-space: nowrap;
  transform: translateX(-50%);
}
.scale {
  display: flex;
}
.scale i {
  width: 32px;
  height: 32px;
}

.details {
  padding: 0 64px;
}
.meta {
  display: flex;
  align-items: center;
  padding-top: 60px;
  color: #a8a8a8;
  font-size: 64px;
  line-height: 80px;
}
.meta time {
  flex: 1;
  margin-left: 36px;
}
.meta b {
  font-size: 52px;
  font-weight: 400;
}
.meta svg {
  fill: #a8a8a8;
}
.runner {
  width: 52px;
  height: 54px;
  margin-left: 8px;
}
.people {
  width: 46px;
  height: 34px;
  margin-right: 8px;
}
.name {
  display: flex;
  align-items: flex-start;
  justify-content: space-between;
  margin-top: 60px;
}
.name h2 {
  font-size: 90px;
  line-height: 104px;
}
.name button {
  padding: 4px 6px;
}
.name svg {
  width: 66px;
  height: 66px;
  fill: #a8a8a8;
}
.memo {
  display: block;
  width: fit-content;
  margin-top: 32px;
  color: #5aa8f8;
  font-size: 56px;
  line-height: 72px;
  text-decoration: none;
}
.distance {
  margin-top: 228px;
}
.value {
  display: flex;
  align-items: baseline;
  gap: 20px;
}
.value small {
  font-size: 76px;
  font-weight: 400;
}
.distance .value {
  font-size: 136px;
  font-weight: 500;
  line-height: 116px;
}
.label {
  color: #a8a8a8;
  font-size: 56px;
  line-height: 72px;
}
.stats {
  display: grid;
  grid-template-columns: 1fr 1fr;
  column-gap: 64px;
  margin-top: 65px;
}
.stat {
  box-sizing: border-box;
  height: 281px;
  padding-top: 24px;
  border-top: 4px solid #3c3c3c;
}
.reading {
  display: flex;
  align-items: flex-start;
  gap: 20px;
  height: 114px;
}
.stat .value {
  font-size: 107px;
  line-height: 104px;
}
.pulse {
  width: 68px;
  height: 68px;
  margin-top: 14px;
  fill: none;
  stroke: #5aa8f8;
  stroke-width: 5;
}
.pulse path {
  stroke-width: 4;
}
.cards {
  display: grid;
  grid-template-columns: 656fr 592fr;
  gap: 64px;
  height: 3px;
  margin-top: 60px;
  overflow: hidden;
}
.card {
  height: 64px;
  border-radius: 24px;
  background: #3c3c3c;
}
</style>
